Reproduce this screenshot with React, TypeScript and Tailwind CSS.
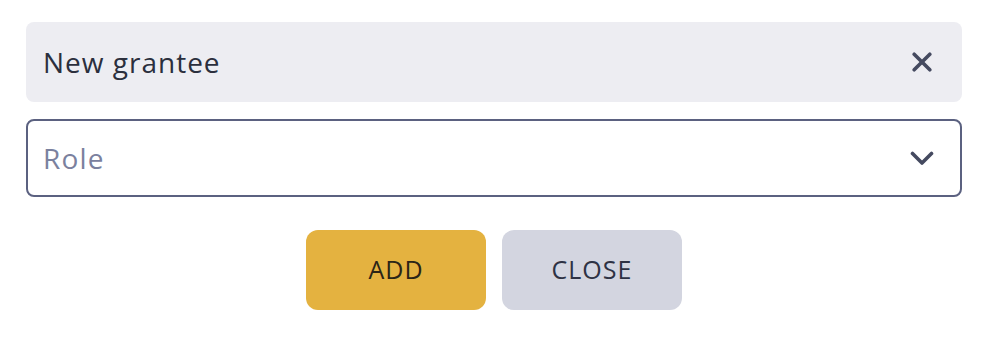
import React from "react";

export default function App() {
  return (
    <div
      className="w-[982px] h-[346px] bg-white pt-[22px] pl-[26px] pr-[20px]"
      style={{ fontFamily: '"Open Sans", "Noto Sans", sans-serif' }}
    >
      {/* header row */}
      <div className="h-[80px] flex items-center justify-between rounded-[8px] bg-[#ededf2] pl-[17px] pr-[30px]">
        <span className="text-[28px] leading-none font-medium text-[#2b2f3d] tracking-[1px]">New grantee</span>
        <button className="w-[20px] h-[20px] flex items-center justify-center text-[#454a60]">
          <svg width="20" height="20" viewBox="0 0 20 20" fill="none">
            <path d="M2.2 2.2 L17.8 17.8 M17.8 2.2 L2.2 17.8" stroke="currentColor" strokeWidth="3.6" strokeLinecap="round" />
          </svg>
        </button>
      </div>

      {/* role select */}
      <div className="mt-[17px] h-[78px] flex items-center justify-between rounded-[8px] border-2 border-[#5b6180] pl-[15px] pr-[26px]">
        <span className="text-[28px] leading-none text-[#7b819e] tracking-[1.2px]">Role</span>
        <svg width="24" height="15" viewBox="0 0 24 15" fill="none" className="text-[#454a60]">
          <path d="M2.5 2.5 L12 12 L21.5 2.5" stroke="currentColor" strokeWidth="3.6" strokeLinecap="round" strokeLinejoin="round" />
        </svg>
      </div>

      {/* actions */}
      <div className="mt-[33px] flex justify-center gap-[16px]">
        <button className="w-[180px] h-[80px] rounded-[12px] bg-[#e4b240] text-[25px] text-[#2a2417] tracking-[1px]">
          ADD
        </button>
        <button className="w-[180px] h-[80px] rounded-[12px] bg-[#d3d5e0] text-[25px] text-[#2e3244] tracking-[1px]">
          CLOSE
        </button>
      </div>
    </div>
  );
}
